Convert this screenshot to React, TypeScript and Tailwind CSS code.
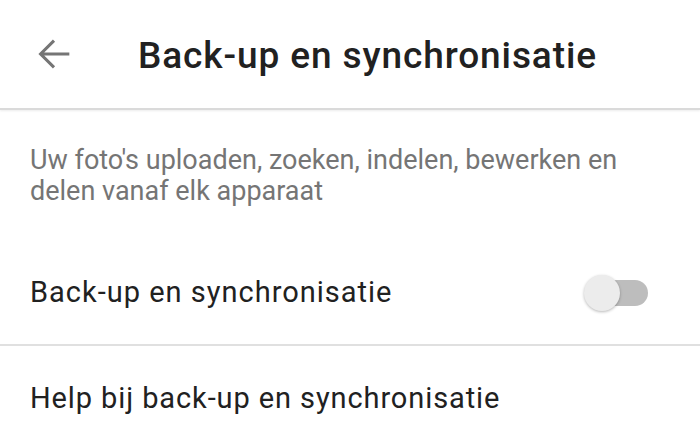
const font = { fontFamily: 'Roboto, "Noto Sans", sans-serif' };

const BackArrow = () => (
  <svg width="46" height="46" viewBox="0 0 24 24" fill="none">
    <path d="M20 12H5.2M12 5l-7 7 7 7" stroke="#757575" strokeWidth="1.6" />
  </svg>
);

const Toggle = () => (
  <div className="relative h-[36px] w-[64px]">
    <div className="absolute top-[5px] right-0 h-[26px] w-[48px] rounded-full bg-[#bdbdbd]" />
    <div className="absolute top-0 left-0 h-[36px] w-[36px] rounded-full bg-[#ececec] shadow-[0_1px_3px_rgba(0,0,0,0.28)]" />
  </div>
);

export default function App() {
  return (
    <div className="flex h-[439px] w-[700px] flex-col overflow-hidden bg-white" style={font}>
      <header className="flex h-[110px] shrink-0 items-center border-b-2 border-[#dadada] shadow-[0_1px_2px_rgba(0,0,0,0.08)]">
        <div className="flex w-[138px] pl-[31px]">
          <BackArrow />
        </div>
        <h1 className="mt-[4px] text-[37px] font-medium tracking-[0.9px] text-[#212121]">Back-up en synchronisatie</h1>
      </header>

      <p className="px-[30px] pt-[35px] pb-[35px] text-[27px] leading-[31px] text-[#757575]">
        Uw foto's uploaden, zoeken, indelen, bewerken en
        <br />
        delen vanaf elk apparaat
      </p>

      <div className="flex h-[104px] shrink-0 items-center justify-between border-b-2 border-[#e0e0e0] pr-[52px] pl-[30px]">
        <span className="text-[29px] tracking-[1px] text-[#212121]">Back-up en synchronisatie</span>
        <Toggle />
      </div>

      <div className="flex h-[106px] shrink-0 items-center pl-[30px]">
        <span className="text-[29px] tracking-[0.9px] text-[#212121]">Help bij back-up en synchronisatie</span>
      </div>
    </div>
  );
}
